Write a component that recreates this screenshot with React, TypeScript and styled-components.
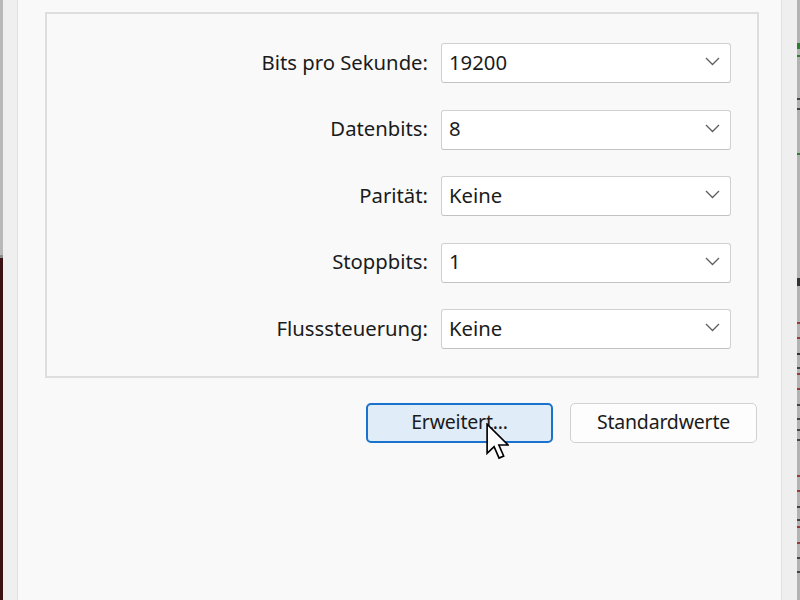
import React from "react";
import styled, { createGlobalStyle } from "styled-components";

const Global = createGlobalStyle`
  html, body { margin: 0; padding: 0; background: #f9f9f9; }
  body { width: 800px; height: 600px; overflow: hidden; }
  #root { width: 800px; height: 600px; }
`;

const Screen = styled.div`
  display: flex;
  width: 800px;
  height: 600px;
  font-family: "Segoe UI", "Noto Sans", "Open Sans", sans-serif;
  color: #1b1b1b;
`;

const LeftEdge = styled.div`
  width: 3px;
  display: flex;
  flex-direction: column;
`;

const LeftEdgeTop = styled.div`
  height: 255px;
  background: #b8b8b8;
  border-bottom: 3px solid #8d8d8d;
`;

const LeftEdgeBottom = styled.div`
  flex: 1;
  background: #3b1113;
`;

const SideStrip = styled.div<{ $side: "left" | "right" }>`
  width: ${(p) => (p.$side === "left" ? "14px" : "15px")};
  background: #efefef;
  ${(p) =>
    p.$side === "left"
      ? "border-right: 1px solid #e2e2e2;"
      : "border-left: 1px solid #e2e2e2;"}
`;

const Dialog = styled.div`
  flex: 1;
  background: #f9f9f9;
  padding: 12px 22px 0 27px;
  display: flex;
  flex-direction: column;
`;

const GroupBox = styled.div`
  border: 2px solid #dedede;
  padding: 29px 26px 27px 0;
  display: grid;
  grid-template-columns: 1fr 290px;
  grid-auto-rows: 40px;
  column-gap: 13px;
  row-gap: 26.5px;
`;

const Label = styled.label`
  font-size: 20.3px;
  display: flex;
  align-items: center;
  justify-content: flex-end;
  padding-bottom: 3px;
`;

const Combo = styled.div`
  background: #ffffff;
  border: 1.5px solid #d0d0d0;
  border-bottom-color: #c2c2c2;
  border-radius: 3px;
  display: flex;
  align-items: center;
  justify-content: space-between;
  padding: 0 10px 3px 7px;
  font-size: 20.3px;
`;

const ButtonRow = styled.div`
  display: flex;
  justify-content: flex-end;
  gap: 17px;
  margin-top: 25px;
  padding-right: 2px;
  position: relative;
`;

const Button = styled.button<{ $focused?: boolean }>`
  width: 187px;
  height: 40px;
  border-radius: 5px;
  font-family: inherit;
  font-size: 19.5px;
  color: #1b1b1b;
  letter-spacing: -0.2px;
  background: ${(p) => (p.$focused ? "#e0ecf8" : "#fdfdfd")};
  border: ${(p) => (p.$focused ? "2px solid #1a72cc" : "1.5px solid #d0d0d0")};
  padding: 0 0 3px;
`;

const Cursor = styled.svg`
  position: absolute;
  left: 441px;
  top: 20px;
  width: 23px;
  height: 37px;
`;

const RightEdge = styled.svg`
  width: 3px;
  height: 600px;
  display: block;
`;

const Chevron = () => (
  <svg width="15" height="9" viewBox="0 0 15 9">
    <polyline
      points="1,1 7.5,7.5 14,1"
      fill="none"
      stroke="#5e5e5e"
      strokeWidth="1.3"
    />
  </svg>
);

const settings: { label: string; value: string }[] = [
  { label: "Bits pro Sekunde:", value: "19200" },
  { label: "Datenbits:", value: "8" },
  { label: "Parität:", value: "Keine" },
  { label: "Stoppbits:", value: "1" },
  { label: "Flusssteuerung:", value: "Keine" },
];

// tick marks visible on the neighbouring window's edge
const ticks: { y: number; h: number; c: string }[] = [
  { y: 43, h: 6, c: "#2e7d32" },
  { y: 55, h: 2, c: "#2e7d32" },
  { y: 98, h: 2, c: "#444" },
  { y: 108, h: 2, c: "#444" },
  { y: 153, h: 2, c: "#2e7d32" },
  { y: 278, h: 8, c: "#333" },
  { y: 322, h: 2, c: "#9a3b3b" },
  { y: 337, h: 2, c: "#9a3b3b" },
  { y: 353, h: 2, c: "#333" },
  { y: 367, h: 2, c: "#444" },
  { y: 373, h: 2, c: "#9a3b3b" },
  { y: 388, h: 2, c: "#9a3b3b" },
  { y: 404, h: 2, c: "#444" },
  { y: 418, h: 2, c: "#444" },
  { y: 429, h: 2, c: "#444" },
  { y: 439, h: 2, c: "#444" },
  { y: 475, h: 2, c: "#9a3b3b" },
  { y: 490, h: 2, c: "#9a3b3b" },
  { y: 506, h: 2, c: "#444" },
  { y: 519, h: 2, c: "#444" },
  { y: 526, h: 2, c: "#9a3b3b" },
  { y: 542, h: 2, c: "#9a3b3b" },
  { y: 557, h: 2, c: "#444" },
  { y: 571, h: 2, c: "#444" },
];

export default function App() {
  return (
    <>
      <Global />
      <Screen>
        <LeftEdge>
          <LeftEdgeTop />
          <LeftEdgeBottom />
        </LeftEdge>
        <SideStrip $side="left" />
        <Dialog>
          <GroupBox>
            {settings.map((s) => (
              <React.Fragment key={s.label}>
                <Label>{s.label}</Label>
                <Combo>
                  <span>{s.value}</span>
                  <Chevron />
                </Combo>
              </React.Fragment>
            ))}
          </GroupBox>
          <ButtonRow>
            <Button $focused>Erweitert...</Button>
            <Button>Standardwerte</Button>
            <Cursor viewBox="0 0 12.5 20">
              <path
                d="M0.6 0.6 V16.4 L4.4 12.8 L7.1 19 L9.6 17.9 L7 11.9 H12 Z"
                fill="#ffffff"
                stroke="#000000"
                strokeWidth="0.9"
                strokeLinejoin="miter"
              />
            </Cursor>
          </ButtonRow>
        </Dialog>
        <SideStrip $side="right" />
        <RightEdge viewBox="0 0 3 600" preserveAspectRatio="none">
          <rect x="0" y="0" width="3" height="600" fill="#b3b3b3" />
          {ticks.map((t) => (
            <rect key={t.y} x="0" y={t.y} width="3" height={t.h} fill={t.c} />
          ))}
        </RightEdge>
      </Screen>
    </>
  );
}
